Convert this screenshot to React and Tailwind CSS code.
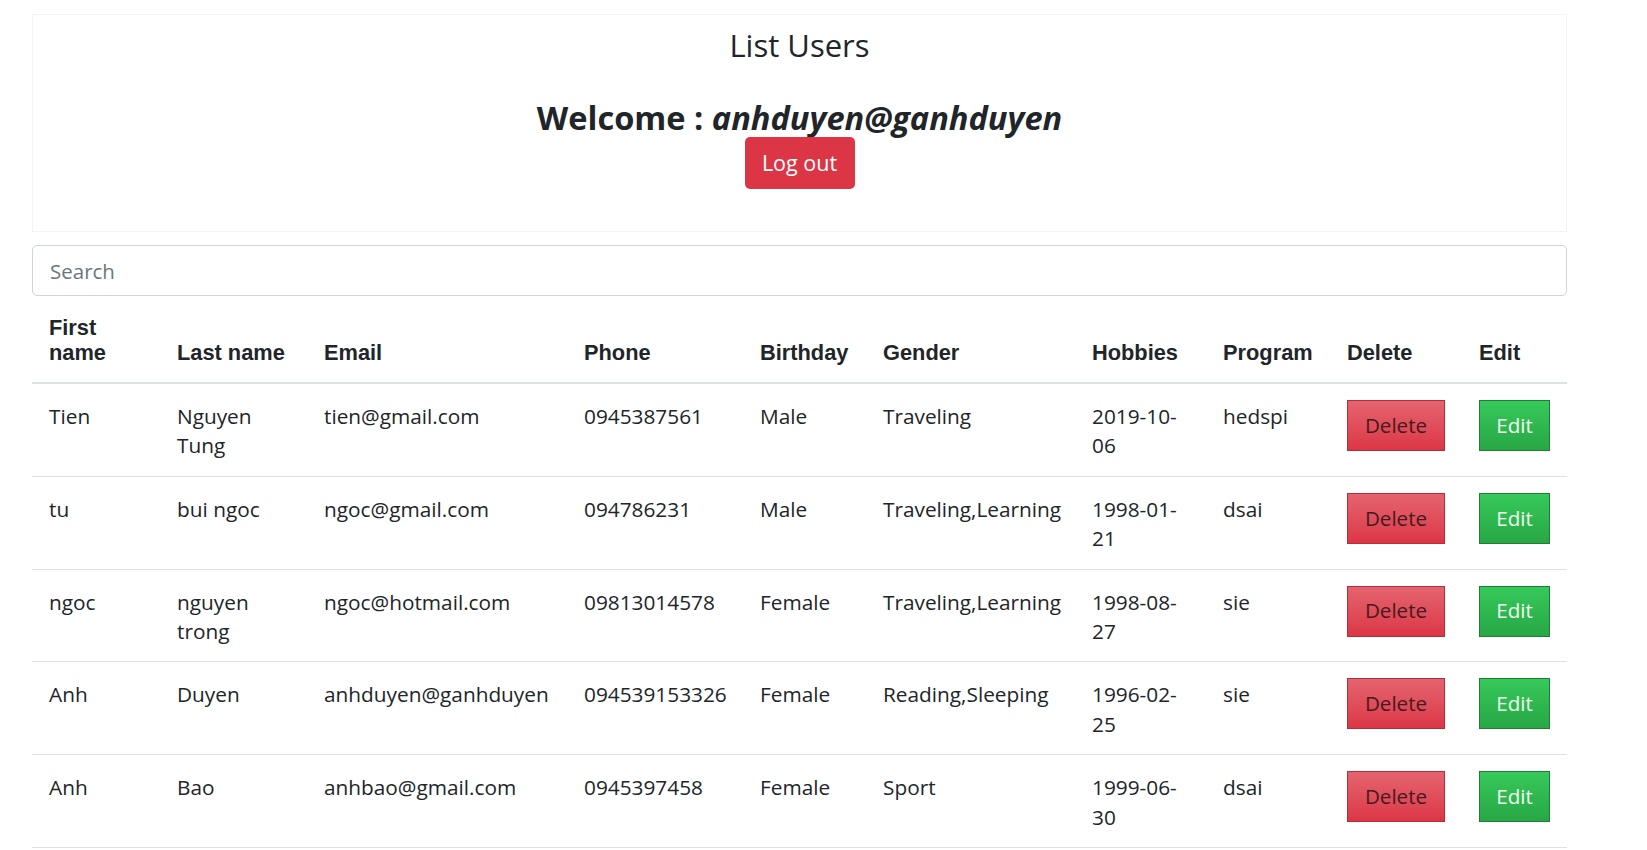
import React, { useState } from 'react';

const users = [
  { first: 'Tien', last: 'Nguyen Tung', email: 'tien@gmail.com', phone: '0945387561', gender: 'Male', hobbies: 'Traveling', birthday: '2019-10-06', program: 'hedspi' },
  { first: 'tu', last: 'bui ngoc', email: 'ngoc@gmail.com', phone: '094786231', gender: 'Male', hobbies: 'Traveling,Learning', birthday: '1998-01-21', program: 'dsai' },
  { first: 'ngoc', last: 'nguyen trong', email: 'ngoc@hotmail.com', phone: '09813014578', gender: 'Female', hobbies: 'Traveling,Learning', birthday: '1998-08-27', program: 'sie' },
  { first: 'Anh', last: 'Duyen', email: 'anhduyen@ganhduyen', phone: '094539153326', gender: 'Female', hobbies: 'Reading,Sleeping', birthday: '1996-02-25', program: 'sie' },
  { first: 'Anh', last: 'Bao', email: 'anhbao@gmail.com', phone: '0945397458', gender: 'Female', hobbies: 'Sport', birthday: '1999-06-30', program: 'dsai' },
];

// header labels don't line up with the data columns in the original page, keep it that way
const headers = ['First name', 'Last name', 'Email', 'Phone', 'Birthday', 'Gender', 'Hobbies', 'Program', 'Delete', 'Edit'];

export default function App() {
  const [search, setSearch] = useState('');

  const rows = users.filter(u =>
    Object.values(u).join(' ').toLowerCase().includes(search.toLowerCase())
  );

  return (
    <div className="min-h-screen bg-white pl-[32px] pt-[14px] text-[#212529] font-['Open_Sans',sans-serif]">
      <div className="w-[1535px]">
        <div className="h-[218px] border border-[#f3f3f3] text-center pt-[10px]">
          <h2 className="text-[31px] leading-[40px] font-normal">List Users</h2>
          <h1 className="mt-[32px] text-[32.6px] leading-[42px] font-bold">
            Welcome : <em>anhduyen@ganhduyen</em>
          </h1>
          <button className="mt-[-2px] h-[52px] w-[110px] rounded-[5px] bg-[#dc3545] text-[21.5px] text-white">
            Log out
          </button>
        </div>

        <input
          value={search}
          onChange={e => setSearch(e.target.value)}
          placeholder="Search"
          className="mt-[13px] block h-[51px] w-full rounded-[5px] border border-[#ced4da] px-[17px] text-[20.5px] placeholder:text-[#6c757d] outline-none"
        />

        <table className="w-full table-fixed border-collapse text-left">
          <colgroup>
            <col className="w-[128px]" />
            <col className="w-[147px]" />
            <col className="w-[260px]" />
            <col className="w-[176px]" />
            <col className="w-[123px]" />
            <col className="w-[209px]" />
            <col className="w-[131px]" />
            <col className="w-[124px]" />
            <col className="w-[132px]" />
            <col className="w-[105px]" />
          </colgroup>
          <thead>
            <tr className="border-b-2 border-[#dee2e6]">
              {headers.map(h => (
                <th
                  key={h}
                  className="px-[17px] pt-[19px] pb-[17px] align-bottom text-[21.8px] leading-[25px] font-bold font-['Liberation_Sans',Arial,sans-serif]"
                >
                  {h === 'First name' ? <>First<br />name</> : h}
                </th>
              ))}
            </tr>
          </thead>
          <tbody className="text-[20.8px] leading-[29.4px]">
            {rows.map((u, i) => (
              <tr key={i} className="border-b border-[#dee2e6] align-top">
                <td className="px-[17px] pt-[18px] pb-[15px]">{u.first}</td>
                <td className="px-[17px] pt-[18px] pb-[15px]">{u.last}</td>
                <td className="px-[17px] pt-[18px] pb-[15px]">{u.email}</td>
                <td className="px-[17px] pt-[18px] pb-[15px]">{u.phone}</td>
                <td className="px-[17px] pt-[18px] pb-[15px]">{u.gender}</td>
                <td className="px-[17px] pt-[18px] pb-[15px]">{u.hobbies}</td>
                <td className="px-[17px] pt-[18px] pb-[15px]">{u.birthday}</td>
                <td className="px-[17px] pt-[18px] pb-[15px]">{u.program}</td>
                <td className="px-[17px] pt-[18px] pb-[15px]">
                  <button className="-mt-[2px] block h-[51px] w-[98px] border border-[#b52d3a] bg-gradient-to-b from-[#e4636f] to-[#dc3545] text-[20.6px] text-[#451a1f]">
                    Delete
                  </button>
                </td>
                <td className="px-[17px] pt-[18px] pb-[15px]">
                  <button className="-mt-[2px] block h-[51px] w-[71px] border border-[#1e7e34] bg-gradient-to-b from-[#36c95a] to-[#28a745] text-[20.6px] text-[#f0fff2]">
                    Edit
                  </button>
                </td>
              </tr>
            ))}
          </tbody>
        </table>
      </div>
    </div>
  );
}
